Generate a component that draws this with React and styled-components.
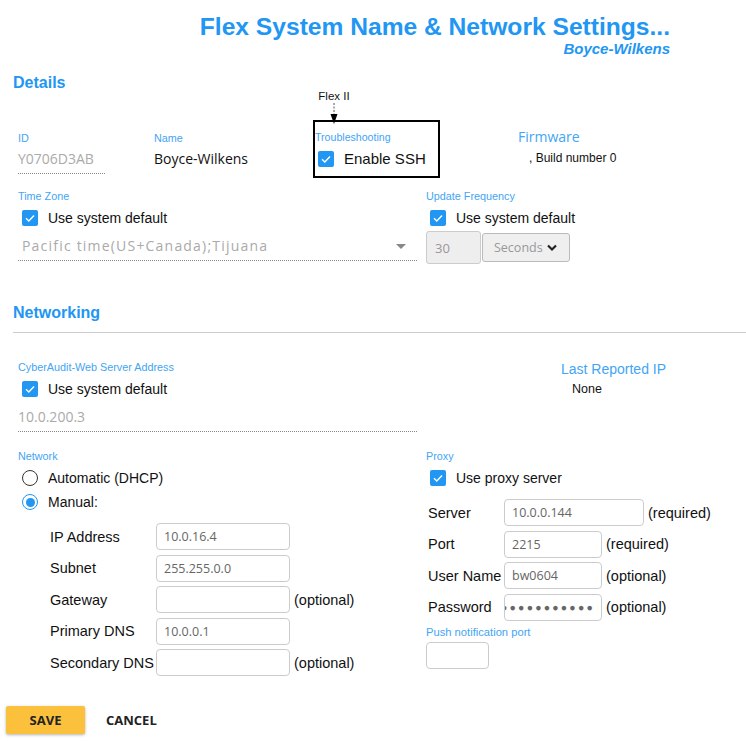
import React from 'react'
import styled, { createGlobalStyle } from 'styled-components'

const sans = `"Liberation Sans", Arial, sans-serif`
const open = `"Open Sans", "Noto Sans", sans-serif`
const blue = '#2196f3'
const lightBlue = '#42a5f5'

const GlobalStyle = createGlobalStyle`
    body {
        margin: 0;
        background: #fff;
        font-family: ${sans};
        color: #111;
    }
`

const Page = styled.div`
    width: 746px;
    padding-bottom: 6px;
`

const Header = styled.header`
    padding: 13px 76px 0 0;
    text-align: right;
`

const Title = styled.h1`
    margin: 0;
    font-family: ${sans};
    font-weight: 700;
    font-size: 24.6px;
    line-height: 28px;
    color: ${blue};
`

const Subtitle = styled.div`
    font-family: ${sans};
    font-weight: 700;
    font-style: italic;
    font-size: 15px;
    line-height: 18px;
    color: ${blue};
    margin-top: -1px;
`

const SectionTitle = styled.h2`
    margin: ${props => props.$top}px 0 0 13px;
    font-family: ${sans};
    font-weight: 700;
    font-size: 16px;
    line-height: 20px;
    color: ${blue};
`

const Rule = styled.hr`
    margin: 9px 0 0 13px;
    border: 0;
    border-top: 1px solid #ccc;
`

const TopRow = styled.div`
    display: flex;
    align-items: flex-start;
    padding-left: 18px;
    margin-top: 27px;
`

const Field = styled.div`
    width: ${props => props.$width}px;
    padding-top: 11px;
`

const SmallLabel = styled.div`
    font-family: ${sans};
    font-size: ${props => props.$size || 10.8}px;
    line-height: 14px;
    color: ${lightBlue};
    margin-top: ${props => props.$top || 0}px;
    white-space: nowrap;
`

const ReadValue = styled.div`
    margin-top: ${props => props.$top || 4}px;
    align-self: stretch;
    width: ${props => (props.$width ? `${props.$width}px` : 'auto')};
    font-family: ${open};
    font-size: 14px;
    line-height: 20px;
    color: ${props => (props.$muted ? '#aaa' : '#111')};
    padding-bottom: ${props => (props.$dotted ? 4 : 0)}px;
    border-bottom: ${props => (props.$dotted ? '1px dotted #888' : 'none')};
`

const Annotated = styled.div`
    position: relative;
`

const Callout = styled.div`
    position: absolute;
    left: 5px;
    top: -30px;
    width: 32px;
    display: flex;
    flex-direction: column;
    align-items: center;
    font-family: ${sans};
    font-size: 11.5px;
    line-height: 13px;
    white-space: nowrap;
    color: #111;
`

const TroubleBox = styled.div`
    width: 123px;
    border: 2px solid #000;
    padding: 8px 0 7px 0;
`

const Firmware = styled.div`
    margin-left: 78px;
    padding-top: 8px;
`

const FirmwareLabel = styled.div`
    font-family: ${open};
    font-size: 14px;
    line-height: 18px;
    color: ${lightBlue};
`

const FirmwareValue = styled.div`
    margin: 4px 0 0 11px;
    font-family: ${sans};
    font-size: 12px;
    line-height: 16px;
`

const TwoCol = styled.div`
    display: grid;
    grid-template-columns: 399px 1fr;
    column-gap: 9px;
    padding-left: 18px;
    margin-top: ${props => props.$top}px;
`

const Col = styled.div`
    display: flex;
    flex-direction: column;
    align-items: flex-start;
`

const CheckRow = styled.label`
    display: flex;
    align-items: center;
    gap: ${props => props.$gap || 10}px;
    margin: ${props => props.$top || 0}px 0 0 ${props => props.$left || 4}px;
    font-family: ${sans};
    font-size: ${props => props.$size || 14}px;
    line-height: 20px;
    color: #111;
`

const Box = styled.span`
    width: 16px;
    height: 16px;
    border-radius: 2px;
    background: ${blue};
    display: inline-flex;
    flex-shrink: 0;
`

const RadioDot = styled.span`
    box-sizing: border-box;
    width: 16px;
    height: 16px;
    border-radius: 50%;
    border: 1.5px solid ${props => (props.$on ? blue : '#333')};
    display: inline-flex;
    align-items: center;
    justify-content: center;
    flex-shrink: 0;

    &::after {
        content: '';
        width: 9px;
        height: 9px;
        border-radius: 50%;
        background: ${props => (props.$on ? blue : 'transparent')};
    }
`

const SelectLine = styled.div`
    align-self: stretch;
    margin-top: 8px;
    padding: 0 11px 4px 4px;
    display: flex;
    align-items: center;
    justify-content: space-between;
    border-bottom: 1px dotted #888;
    font-family: ${open};
    font-size: 14px;
    line-height: 20px;
    letter-spacing: 1.2px;
    color: #aaa;
`

const Caret = styled.span`
    width: 0;
    height: 0;
    border-left: 5px solid transparent;
    border-right: 5px solid transparent;
    border-top: 5px solid #888;
`

const FreqRow = styled.div`
    display: flex;
    align-items: center;
    gap: 1px;
    margin-top: 3px;
`

const NumBox = styled.div`
    box-sizing: border-box;
    width: 55px;
    height: 33px;
    padding-left: 8px;
    display: flex;
    align-items: center;
    background: #eee;
    border: 1px solid #ccc;
    border-radius: 3px;
    font-family: ${open};
    font-size: 13px;
    color: #999;
`

const UnitSelect = styled.div`
    box-sizing: border-box;
    width: 88px;
    height: 29px;
    padding: 0 12px 0 11px;
    display: flex;
    align-items: center;
    justify-content: space-between;
    background: #efefef;
    border: 1px solid #bbb;
    border-radius: 3px;
    font-family: ${open};
    font-size: 12.5px;
    color: #999;
`

const IpInfo = styled.div`
    margin-left: 135px;
`

const IpLabel = styled.div`
    font-family: ${sans};
    font-size: 14px;
    line-height: 18px;
    color: ${lightBlue};
`

const IpValue = styled.div`
    margin: 3px 0 0 11px;
    font-family: ${sans};
    font-size: 12.5px;
    line-height: 16px;
`

const RadioList = styled.div`
    display: flex;
    flex-direction: column;
    gap: 4px;
    margin-top: 5px;
`

const FormRows = styled.div`
    display: flex;
    flex-direction: column;
    gap: 4.5px;
    margin: 11px 0 0 ${props => props.$left}px;
`

const FormRow = styled.div`
    display: flex;
    align-items: center;
    font-family: ${sans};
    font-size: 14.5px;
    color: #111;
`

const RowLabel = styled.span`
    width: ${props => props.$width}px;
    white-space: nowrap;
`

const TextBox = styled.div`
    box-sizing: border-box;
    width: ${props => props.$width}px;
    height: ${props => props.$height || 27}px;
    margin-top: ${props => props.$top || 0}px;
    padding: 0 6px 0 7px;
    display: flex;
    align-items: center;
    justify-content: ${props => (props.$dots ? 'flex-end' : 'flex-start')};
    border: 1px solid #ccc;
    border-radius: 4px;
    background: #fff;
    font-family: ${open};
    font-size: ${props => (props.$dots ? 10.5 : 12.5)}px;
    color: #666;
    letter-spacing: ${props => (props.$dots ? '2.2px' : 'normal')};
    overflow: hidden;
    white-space: nowrap;
`

const Hint = styled.span`
    margin-left: 4px;
`

const Actions = styled.div`
    display: flex;
    align-items: center;
    gap: 21px;
    margin: 30px 0 0 6px;
`

const SaveButton = styled.button`
    width: 79px;
    height: 28px;
    border: 0;
    border-radius: 2px;
    background: #fcc13c;
    box-shadow: 0 1px 3px rgba(0, 0, 0, 0.3);
    font-family: ${open};
    font-weight: 700;
    font-size: 13px;
    color: #222;
`

const CancelButton = styled.button`
    border: 0;
    padding: 0;
    background: none;
    font-family: ${open};
    font-weight: 700;
    font-size: 13px;
    color: #222;
`

const Check = () => (
    <Box>
        <svg width="16" height="16" viewBox="0 0 16 16">
            <polyline points="4,8.3 6.8,11 12,5.5" fill="none" stroke="#fff" strokeWidth="1.4" />
        </svg>
    </Box>
)

const Arrow = () => (
    <svg width="8" height="22" viewBox="0 0 8 22">
        <line x1="4" y1="0" x2="4" y2="12" stroke="#555" strokeWidth="1" strokeDasharray="2 1.5" />
        <polygon points="0.5,11 7.5,11 4,21" fill="#000" />
    </svg>
)

const Chevron = () => (
    <svg width="10" height="8" viewBox="0 0 10 8">
        <polyline points="1,1.5 5,5.5 9,1.5" fill="none" stroke="#222" strokeWidth="2.2" />
    </svg>
)

const network = [
    { label: 'IP Address', value: '10.0.16.4' },
    { label: 'Subnet', value: '255.255.0.0' },
    { label: 'Gateway', value: '', hint: '(optional)' },
    { label: 'Primary DNS', value: '10.0.0.1' },
    { label: 'Secondary DNS', value: '', hint: '(optional)' },
]

const proxy = [
    { label: 'Server', value: '10.0.0.144', width: 140, hint: '(required)' },
    { label: 'Port', value: '2215', width: 98, hint: '(required)' },
    { label: 'User Name', value: 'bw0604', width: 98, hint: '(optional)' },
    { label: 'Password', value: '\u25CF'.repeat(11), width: 98, hint: '(optional)', dots: true },
]

const App = () => {
    return (
        <>
            <GlobalStyle />
            <Page>
                <Header>
                    <Title>Flex System Name &amp; Network Settings...</Title>
                    <Subtitle>Boyce-Wilkens</Subtitle>
                </Header>

                <SectionTitle $top={15}>Details</SectionTitle>

                <TopRow>
                    <Field $width={136}>
                        <SmallLabel>ID</SmallLabel>
                        <ReadValue $muted $dotted $width={87}>Y0706D3AB</ReadValue>
                    </Field>
                    <Field $width={159}>
                        <SmallLabel>Name</SmallLabel>
                        <ReadValue>Boyce-Wilkens</ReadValue>
                    </Field>
                    <Annotated>
                        <Callout>
                            Flex II
                            <Arrow />
                        </Callout>
                        <TroubleBox>
                            <SmallLabel $size={10.6}>Troubleshooting</SmallLabel>
                            <CheckRow $top={5} $left={3} $size={15}>
                                <Check />
                                Enable SSH
                            </CheckRow>
                        </TroubleBox>
                    </Annotated>
                    <Firmware>
                        <FirmwareLabel>Firmware</FirmwareLabel>
                        <FirmwareValue>, Build number 0</FirmwareValue>
                    </Firmware>
                </TopRow>

                <TwoCol $top={11}>
                    <Col>
                        <SmallLabel>Time Zone</SmallLabel>
                        <CheckRow $top={5}>
                            <Check />
                            Use system default
                        </CheckRow>
                        <SelectLine>
                            Pacific time(US+Canada);Tijuana
                            <Caret />
                        </SelectLine>
                    </Col>
                    <Col>
                        <SmallLabel>Update Frequency</SmallLabel>
                        <CheckRow $top={5}>
                            <Check />
                            Use system default
                        </CheckRow>
                        <FreqRow>
                            <NumBox>30</NumBox>
                            <UnitSelect>
                                Seconds
                                <Chevron />
                            </UnitSelect>
                        </FreqRow>
                    </Col>
                </TwoCol>

                <SectionTitle $top={39}>Networking</SectionTitle>
                <Rule />

                <TwoCol $top={27}>
                    <Col>
                        <SmallLabel>CyberAudit-Web Server Address</SmallLabel>
                        <CheckRow $top={5}>
                            <Check />
                            Use system default
                        </CheckRow>
                        <ReadValue $muted $dotted $top={8}>10.0.200.3</ReadValue>
                    </Col>
                    <Col>
                        <IpInfo>
                            <IpLabel>Last Reported IP</IpLabel>
                            <IpValue>None</IpValue>
                        </IpInfo>
                    </Col>
                </TwoCol>

                <TwoCol $top={17}>
                    <Col>
                        <SmallLabel>Network</SmallLabel>
                        <RadioList>
                            <CheckRow>
                                <RadioDot />
                                Automatic (DHCP)
                            </CheckRow>
                            <CheckRow>
                                <RadioDot $on />
                                Manual:
                            </CheckRow>
                        </RadioList>
                        <FormRows $left={32}>
                            {network.map(row => (
                                <FormRow key={row.label}>
                                    <RowLabel $width={106}>{row.label}</RowLabel>
                                    <TextBox $width={134}>{row.value}</TextBox>
                                    {row.hint && <Hint>{row.hint}</Hint>}
                                </FormRow>
                            ))}
                        </FormRows>
                    </Col>
                    <Col>
                        <SmallLabel>Proxy</SmallLabel>
                        <CheckRow $top={5}>
                            <Check />
                            Use proxy server
                        </CheckRow>
                        <FormRows $left={2}>
                            {proxy.map(row => (
                                <FormRow key={row.label}>
                                    <RowLabel $width={76}>{row.label}</RowLabel>
                                    <TextBox $width={row.width} $dots={row.dots}>{row.value}</TextBox>
                                    <Hint>{row.hint}</Hint>
                                </FormRow>
                            ))}
                        </FormRows>
                        <SmallLabel $top={4} $size={11.2}>Push notification port</SmallLabel>
                        <TextBox $width={63} $height={27} $top={3} />
                    </Col>
                </TwoCol>

                <Actions>
                    <SaveButton>SAVE</SaveButton>
                    <CancelButton>CANCEL</CancelButton>
                </Actions>
            </Page>
        </>
    )
}

export default App
